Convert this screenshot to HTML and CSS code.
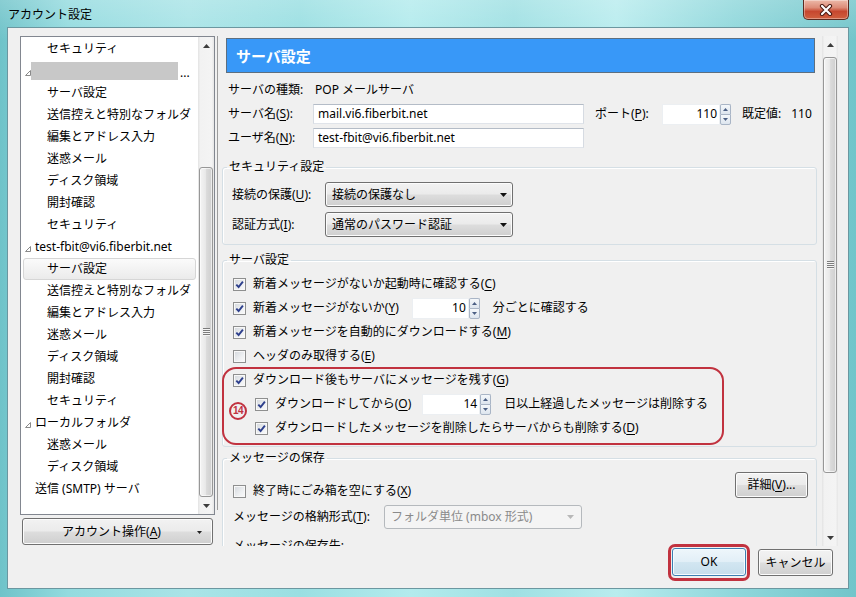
FILE: index.html
```html
<!DOCTYPE html>
<html lang="ja">
<head>
<meta charset="utf-8">
<title>アカウント設定</title>
<link rel="stylesheet" href="styles.css">
</head>
<body>
<div class="window">
  <div class="titlebar">
    <span class="title">アカウント設定</span>
    <div class="close">
      <svg width="16" height="12" viewBox="0 0 16 12"><path d="M4 2 L12 10 M12 2 L4 10" stroke="#4a1a12" stroke-width="4.2" stroke-linecap="round"/><path d="M4 2 L12 10 M12 2 L4 10" stroke="#ffffff" stroke-width="2.2" stroke-linecap="round"/></svg>
    </div>
  </div>
  <div class="client">
    <div class="main">
      <div class="left">
        <div class="tree">
          <div class="tree-list">
            <div class="ti l2">セキュリティ</div>
            <div class="ti l1 tw blurrow"><svg class="twisty" viewBox="0 0 6 6"><polygon points="5.5,0.5 5.5,5.5 0.5,5.5" fill="#fff" stroke="#8a8a8a"/></svg><span class="blur"></span><span class="ell">...</span></div>
            <div class="ti l2">サーバ設定</div>
            <div class="ti l2">送信控えと特別なフォルダ</div>
            <div class="ti l2">編集とアドレス入力</div>
            <div class="ti l2">迷惑メール</div>
            <div class="ti l2">ディスク領域</div>
            <div class="ti l2">開封確認</div>
            <div class="ti l2">セキュリティ</div>
            <div class="ti l1 tw"><svg class="twisty" viewBox="0 0 6 6"><polygon points="5.5,0.5 5.5,5.5 0.5,5.5" fill="#fff" stroke="#8a8a8a"/></svg>test-fbit@vi6.fiberbit.net</div>
            <div class="ti l2 sel">サーバ設定</div>
            <div class="ti l2">送信控えと特別なフォルダ</div>
            <div class="ti l2">編集とアドレス入力</div>
            <div class="ti l2">迷惑メール</div>
            <div class="ti l2">ディスク領域</div>
            <div class="ti l2">開封確認</div>
            <div class="ti l2">セキュリティ</div>
            <div class="ti l1 tw"><svg class="twisty" viewBox="0 0 6 6"><polygon points="5.5,0.5 5.5,5.5 0.5,5.5" fill="#fff" stroke="#8a8a8a"/></svg>ローカルフォルダ</div>
            <div class="ti l2">迷惑メール</div>
            <div class="ti l2">ディスク領域</div>
            <div class="ti l1">送信 (SMTP) サーバ</div>
          </div>
          <div class="vscroll tree-scroll">
            <div class="sb-btn"><svg width="7" height="4" viewBox="0 0 7 4"><polygon points="3.5,0 7,4 0,4" fill="#3c3c3c"/></svg></div>
            <div class="sb-track"><div class="sb-thumb"><span class="grip"></span></div></div>
            <div class="sb-btn"><svg width="7" height="4" viewBox="0 0 7 4"><polygon points="0,0 7,0 3.5,4" fill="#3c3c3c"/></svg></div>
          </div>
        </div>
        <div class="btn acct"><span class="acct-label">アカウント操作(<u>A</u>)</span><svg class="dd" width="5" height="3" viewBox="0 0 5 3"><polygon points="0,0 5,0 2.5,3" fill="#222"/></svg></div>
      </div>
      <div class="divider"></div>
      <div class="right">
        <div class="pane">
          <div class="hdr">サーバ設定</div>
          <div class="info">
            <div class="irow"><span class="lab">サーバの種類:</span><span class="val">POP メールサーバ</span></div>
            <div class="irow"><span class="lab">サーバ名(<u>S</u>):</span><span class="txt">mail.vi6.fiberbit.net</span><span class="port-lab">ポート(<u>P</u>):</span><span class="spin"><span class="field">110</span><span class="spin-btns"><span><svg width="5" height="3" viewBox="0 0 5 3"><polygon points="2.5,0 5,3 0,3" fill="#4b5f84"/></svg></span><span><svg width="5" height="3" viewBox="0 0 5 3"><polygon points="0,0 5,0 2.5,3" fill="#4b5f84"/></svg></span></span></span><span class="def">既定値:</span><span class="defv">110</span></div>
            <div class="irow"><span class="lab">ユーザ名(<u>N</u>):</span><span class="txt">test-fbit@vi6.fiberbit.net</span></div>
          </div>

          <fieldset class="grp sec">
            <legend>セキュリティ設定</legend>
            <div class="sec-body">
              <div class="srow"><span class="slab">接続の保護(<u>U</u>):</span><span class="sel-box"><span>接続の保護なし</span><svg width="7" height="4" viewBox="0 0 7 4"><polygon points="0,0 7,0 3.5,4" fill="#111"/></svg></span></div>
              <div class="srow"><span class="slab">認証方式(<u>I</u>):</span><span class="sel-box"><span>通常のパスワード認証</span><svg width="7" height="4" viewBox="0 0 7 4"><polygon points="0,0 7,0 3.5,4" fill="#111"/></svg></span></div>
            </div>
          </fieldset>

          <fieldset class="grp srv">
            <legend>サーバ設定</legend>
            <div class="srv-body">
              <div class="crow"><span class="cb on"><svg viewBox="0 0 11 11"><path d="M2.3 5.6 L4.6 8 L8.9 2.6" fill="none" stroke="#2d3f8c" stroke-width="1.9"/></svg></span><span>新着メッセージがないか起動時に確認する(<u>C</u>)</span></div>
              <div class="crow"><span class="cb on"><svg viewBox="0 0 11 11"><path d="M2.3 5.6 L4.6 8 L8.9 2.6" fill="none" stroke="#2d3f8c" stroke-width="1.9"/></svg></span><span>新着メッセージがないか(<u>Y</u>)</span><span class="spin gapl w57"><span class="field">10</span><span class="spin-btns"><span><svg width="5" height="3" viewBox="0 0 5 3"><polygon points="2.5,0 5,3 0,3" fill="#4b5f84"/></svg></span><span><svg width="5" height="3" viewBox="0 0 5 3"><polygon points="0,0 5,0 2.5,3" fill="#4b5f84"/></svg></span></span></span><span class="after">分ごとに確認する</span></div>
              <div class="crow"><span class="cb on"><svg viewBox="0 0 11 11"><path d="M2.3 5.6 L4.6 8 L8.9 2.6" fill="none" stroke="#2d3f8c" stroke-width="1.9"/></svg></span><span>新着メッセージを自動的にダウンロードする(<u>M</u>)</span></div>
              <div class="crow"><span class="cb"></span><span>ヘッダのみ取得する(<u>E</u>)</span></div>
              <div class="hl">
                <div class="crow"><span class="cb on"><svg viewBox="0 0 11 11"><path d="M2.3 5.6 L4.6 8 L8.9 2.6" fill="none" stroke="#2d3f8c" stroke-width="1.9"/></svg></span><span>ダウンロード後もサーバにメッセージを残す(<u>G</u>)</span></div>
                <div class="crow ind"><span class="cb on"><svg viewBox="0 0 11 11"><path d="M2.3 5.6 L4.6 8 L8.9 2.6" fill="none" stroke="#2d3f8c" stroke-width="1.9"/></svg></span><span>ダウンロードしてから(<u>O</u>)</span><span class="spin gapl2"><span class="field">14</span><span class="spin-btns"><span><svg width="5" height="3" viewBox="0 0 5 3"><polygon points="2.5,0 5,3 0,3" fill="#4b5f84"/></svg></span><span><svg width="5" height="3" viewBox="0 0 5 3"><polygon points="0,0 5,0 2.5,3" fill="#4b5f84"/></svg></span></span></span><span class="after">日以上経過したメッセージは削除する</span></div>
                <div class="crow ind"><span class="cb on"><svg viewBox="0 0 11 11"><path d="M2.3 5.6 L4.6 8 L8.9 2.6" fill="none" stroke="#2d3f8c" stroke-width="1.9"/></svg></span><span>ダウンロードしたメッセージを削除したらサーバからも削除する(<u>D</u>)</span></div>
                <span class="num">14</span>
              </div>
            </div>
          </fieldset>

          <fieldset class="grp msg">
            <legend>メッセージの保存</legend>
            <div class="msg-body">
              <div class="mrow">
                <div class="crow-inline"><span class="cb"></span><span>終了時にごみ箱を空にする(<u>X</u>)</span></div>
                <span class="btn detail">詳細(<u>V</u>)...</span>
              </div>
              <div class="frow"><span class="flab">メッセージの格納形式(<u>T</u>):</span><span class="sel-box dis"><span>フォルダ単位 (mbox 形式)</span><svg width="7" height="4" viewBox="0 0 7 4"><polygon points="0,0 7,0 3.5,4" fill="#b8b8b8"/></svg></span></div>
              <div class="lrow">メッセージの保存先:</div>
            </div>
          </fieldset>
        </div>
        <div class="vscroll pane-scroll">
          <div class="sb-btn"><svg width="7" height="4" viewBox="0 0 7 4"><polygon points="3.5,0 7,4 0,4" fill="#3c3c3c"/></svg></div>
          <div class="sb-track"><div class="sb-thumb"><span class="grip"></span></div></div>
          <div class="sb-btn"><svg width="7" height="4" viewBox="0 0 7 4"><polygon points="0,0 7,0 3.5,4" fill="#3c3c3c"/></svg></div>
        </div>
      </div>
    </div>
    <div class="footer">
      <div class="okwrap"><span class="btn ok">OK</span></div>
      <span class="btn cancel">キャンセル</span>
    </div>
  </div>
</div>
</body>
</html>
```

FILE: styles.css
```css
* { box-sizing: border-box; }

html, body {
  margin: 0;
  padding: 0;
}

body {
  width: 856px;
  height: 597px;
  overflow: hidden;
  font-family: "Noto Sans", "Noto Sans CJK JP", sans-serif;
  font-size: 12px;
  line-height: 16px;
  color: #000;
  background: #8fd6db;
}

u { text-decoration: underline; text-underline-offset: 2px; }

.window {
  width: 856px;
  height: 597px;
  display: flex;
  flex-direction: column;
  padding: 0 7px 8px;
  background:
    linear-gradient(180deg, rgba(255,255,255,0.18), rgba(255,255,255,0) 40px),
    linear-gradient(90deg, #6fc3c9 0%, #94dbdf 8%, #a9e4e7 22%, #9adfe2 35%, #b3ebed 48%, #9fe0e3 60%, #b8ecee 72%, #8fd7db 86%, #72c5ca 100%);
}

.titlebar {
  height: 27px;
  flex: none;
  display: flex;
  justify-content: space-between;
  align-items: flex-start;
}

.title {
  margin-left: 1px;
  margin-top: 7px;
  font-size: 12px;
  line-height: 16px;
  color: #000;
}

.close {
  width: 46px;
  height: 20px;
  border: 1px solid #5b2a20;
  border-top: none;
  border-radius: 0 0 5px 5px;
  background: linear-gradient(180deg, #ecb9a9 0%, #dd8c78 40%, #c6472f 60%, #d0603f 100%);
  box-shadow: inset 0 0 0 1px rgba(255,255,255,0.35);
  display: flex;
  align-items: center;
  justify-content: center;
}

.client {
  height: 562px;
  border: 1px solid #6b97a0;
  background: #f0f0f0;
  padding: 8px 10px 0 12px;
  display: flex;
  flex-direction: column;
}

.main {
  display: flex;
  height: 510px;
  flex: none;
}

/* ---------- left column ---------- */
.left {
  width: 195px;
  display: flex;
  flex-direction: column;
}

.tree {
  height: 479px;
  border: 1px solid #828790;
  background: #fff;
  display: flex;
  overflow: hidden;
}

.tree-list {
  flex: 1;
  min-width: 0;
  padding-top: 1px;
}

.ti {
  height: 22px;
  display: flex;
  align-items: center;
  white-space: nowrap;
  overflow: hidden;
}

.l2 { padding-left: 26px; }
.l1 { padding-left: 14px; }
.l1.tw { padding-left: 4px; }

.twisty {
  width: 6px;
  height: 6px;
  flex: none;
  margin: 4px 4px 0 0;
}

.blurrow .twisty { margin-right: 0; }

.blur {
  width: 147px;
  height: 18px;
  background: #c8c8c8;
  flex: none;
}

.ell {
  margin-left: 2px;
  line-height: 12px;
  margin-top: 4px;
}

.ti.sel {
  margin: 0 2px;
  padding-left: 23px;
  border: 1px solid #d6d6d6;
  border-radius: 3px;
  background: linear-gradient(180deg, #fbfbfb, #ebebeb);
}

/* ---------- scrollbars ---------- */
.vscroll {
  width: 16px;
  flex: none;
  display: flex;
  flex-direction: column;
  background: linear-gradient(90deg, #e3e3e3 0%, #f2f2f2 15%, #f4f4f4 85%, #e6e6e6 100%);
}

.sb-btn {
  height: 17px;
  flex: none;
  display: flex;
  align-items: center;
  justify-content: center;
}

.sb-track {
  flex: 1;
  display: flex;
  flex-direction: column;
  padding: 0 1px;
}

.sb-thumb {
  border: 1px solid #979797;
  border-radius: 3px;
  background: linear-gradient(90deg, #f4f4f4 0%, #e9e9e9 45%, #dadada 55%, #cfcfcf 100%);
  box-shadow: inset 0 0 0 1px rgba(255,255,255,0.6);
  display: flex;
  align-items: center;
  justify-content: center;
}

.tree-scroll .sb-thumb {
  margin-top: 113px;
  flex: 1;
}

.pane-scroll .sb-thumb {
  margin-top: 4px;
  height: 416px;
}

.grip {
  width: 7px;
  height: 8px;
  background: repeating-linear-gradient(180deg, #7c7c7c 0, #7c7c7c 1px, #f4f4f4 1px, #f4f4f4 2px);
}

/* ---------- buttons ---------- */
.btn {
  display: flex;
  align-items: center;
  justify-content: center;
  border: 1px solid #707070;
  border-radius: 3px;
  background: linear-gradient(180deg, #f2f2f2 0%, #ebebeb 48%, #dddddd 52%, #cfcfcf 100%);
  box-shadow: inset 0 0 0 1px #fcfcfc;
  white-space: nowrap;
}

.acct {
  height: 27px;
  margin: 3px 2px 0;
  position: relative;
  padding-right: 12px;
}

.dd {
  position: absolute;
  right: 10px;
  top: 12px;
}

/* ---------- divider ---------- */
.divider {
  width: 1px;
  height: 474px;
  margin: 0 2px 0 2px;
  background: #9c9c9c;
  flex: none;
}

/* ---------- right pane ---------- */
.right {
  flex: 1;
  display: flex;
  min-width: 0;
}

.pane {
  flex: 1;
  min-width: 0;
  overflow: hidden;
}

.hdr {
  margin: 2px 7px 0 6px;
  height: 35px;
  background: #3898f8;
  border: 1px solid #5d6f80;
  color: #fff;
  font-weight: bold;
  font-size: 15px;
  padding-left: 9px;
  display: flex;
  align-items: center;
}

.info {
  padding-left: 8px;
  margin-top: 7px;
  display: flex;
  flex-direction: column;
  gap: 4px;
}

.irow {
  display: flex;
  align-items: center;
  height: 20px;
  white-space: nowrap;
}

.lab { width: 85px; flex: none; }
.val { padding-left: 2px; }

.txt {
  width: 271px;
  height: 20px;
  flex: none;
  background: #fff;
  border: 1px solid;
  border-color: #b4bcc7 #d6dbe2 #e0e4ea #d6dbe2;
  padding-left: 4px;
  display: flex;
  align-items: center;
}

.port-lab {
  margin-left: 11px;
  width: 67px;
  flex: none;
}

.def { margin-left: 11px; }
.defv { margin-left: 10px; }

.spin {
  display: flex;
  height: 21px;
  flex: none;
}

.spin .field {
  width: 58px;
  background: #fff;
  border: 1px solid #eceff2;
  text-align: right;
  padding-right: 2px;
  display: flex;
  align-items: center;
  justify-content: flex-end;
}

.spin.w57 .field { width: 57px; }

.spin-btns {
  width: 11px;
  display: flex;
  flex-direction: column;
}

.spin-btns span {
  flex: 1;
  border: 1px solid #a9b5c6;
  background: linear-gradient(180deg, #f5f8fb, #dde5ee);
  display: flex;
  align-items: center;
  justify-content: center;
}

.spin-btns span:first-child { border-radius: 2px 2px 0 0; border-bottom-width: 0; }
.spin-btns span:last-child { border-radius: 0 0 2px 2px; }

/* ---------- group boxes ---------- */
.grp {
  margin: 0 5px 0 2px;
  padding: 0;
  border: 1px solid #d5dfe5;
  border-radius: 3px;
  min-width: 0;
  box-shadow: inset 1px 1px 0 #fff;
}

.grp legend {
  margin-left: 4px;
  padding: 0 2px;
  line-height: 16px;
}

.sec { margin-top: 11px; }
.srv { margin-top: 7px; }
.msg { margin-top: 3px; }

.sec-body {
  padding: 7px 0 7px 9px;
  display: flex;
  flex-direction: column;
  gap: 5px;
}

.srow {
  display: flex;
  align-items: center;
}

.slab { width: 93px; flex: none; }

.sel-box {
  width: 188px;
  height: 25px;
  flex: none;
  border: 1px solid #707070;
  border-radius: 3px;
  background: linear-gradient(180deg, #f2f2f2 0%, #ebebeb 48%, #dddddd 52%, #cfcfcf 100%);
  box-shadow: inset 0 0 0 1px #fcfcfc;
  display: flex;
  align-items: center;
  justify-content: space-between;
  padding: 0 5px 0 6px;
  white-space: nowrap;
}

.sel-box.dis {
  width: 198px;
  height: 24px;
  border-color: #b5b9bd;
  background: #f4f4f4;
  box-shadow: none;
  color: #8a8a8a;
  padding: 0 7px 0 6px;
}

.srv-body {
  padding: 4px 0 6px 10px;
}

.crow {
  height: 24px;
  display: flex;
  align-items: center;
  white-space: nowrap;
}

.crow.ind { padding-left: 22px; }

.cb {
  width: 13px;
  height: 13px;
  flex: none;
  margin-right: 7px;
  border: 1px solid #8e8f8f;
  background: linear-gradient(135deg, #d3d7dc 0%, #eef0f2 60%, #fafafa 100%);
  box-shadow: inset 0 0 0 1px #f8f8f8;
  display: flex;
  align-items: center;
  justify-content: center;
}

.cb svg { width: 11px; height: 11px; }

.gapl { margin-left: 13px; }
.gapl2 { margin-left: 11px; }
.after { margin-left: 13px; }

.hl { position: relative; }

.hl::after {
  content: "";
  position: absolute;
  left: -11px;
  top: -1px;
  width: 498px;
  height: 74px;
  border: 2px solid #c1323f;
  border-radius: 14px;
  pointer-events: none;
}

.num {
  position: absolute;
  left: -4px;
  top: 34px;
  width: 18px;
  height: 18px;
  border: 2px solid #c1323f;
  border-radius: 50%;
  color: #c1323f;
  font-family: "Liberation Sans", "Noto Sans", sans-serif;
  font-size: 10px;
  font-weight: bold;
  line-height: 14px;
  text-align: center;
  letter-spacing: -0.6px;
  background: #f0f0f0;
}

.msg-body {
  padding: 6px 8px 0 10px;
}

.mrow {
  display: flex;
  align-items: flex-end;
  justify-content: space-between;
  height: 26px;
}

.crow-inline {
  display: flex;
  align-items: center;
  height: 16px;
  margin-bottom: -1px;
  white-space: nowrap;
}

.detail {
  width: 73px;
  height: 26px;
}

.frow {
  display: flex;
  align-items: center;
  margin-top: 7px;
}

.flab {
  flex: none;
  width: 151px;
  white-space: nowrap;
}

.lrow {
  margin-top: 9px;
  white-space: nowrap;
}

/* ---------- footer ---------- */
.footer {
  margin-top: 2px;
  display: flex;
  justify-content: flex-end;
  align-items: flex-start;
  gap: 12px;
  padding-right: 5px;
}

.okwrap { position: relative; }

.okwrap::after {
  content: "";
  position: absolute;
  left: -4px;
  top: -4px;
  right: -4px;
  bottom: -5px;
  border: 3px solid #c1323f;
  border-radius: 7px;
  pointer-events: none;
}

.ok {
  width: 74px;
  height: 28px;
  border-color: #3c7fb1;
  background: linear-gradient(180deg, #eef6fb 0%, #e2eff7 48%, #d2e6f1 52%, #c6deec 100%);
  box-shadow: inset 0 0 0 1px #f6fbfe;
}

.cancel {
  width: 75px;
  height: 27px;
  margin-top: 1px;
}
```
